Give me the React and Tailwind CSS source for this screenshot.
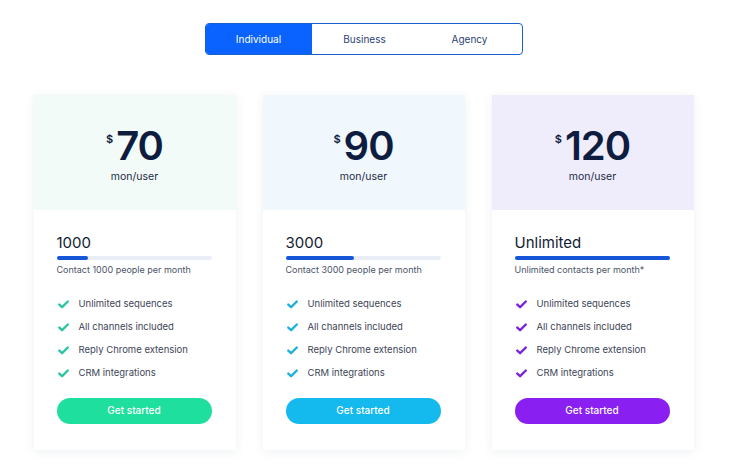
const plans = [
  {
    price: '70',
    head: 'bg-[#f2fbf8]',
    amount: '1000',
    note: 'Contact 1000 people per month',
    fill: 20,
    check: '#2ec4a0',
    button: 'bg-[#1fdf9e]',
  },
  {
    price: '90',
    head: 'bg-[#f0f7fd]',
    amount: '3000',
    note: 'Contact 3000 people per month',
    fill: 44,
    check: '#1fb1dd',
    button: 'bg-[#14b9ee]',
  },
  {
    price: '120',
    head: 'bg-[#efedfc]',
    amount: 'Unlimited',
    note: 'Unlimited contacts per month*',
    fill: 100,
    check: '#7b25d9',
    button: 'bg-[#8a1ff2]',
  },
];

const features = ['Unlimited sequences', 'All channels included', 'Reply Chrome extension', 'CRM integrations'];

function Check({ color }) {
  return (
    <svg width="11" height="9" viewBox="0 0 11 9" className="flex-shrink-0">
      <path d="M1.3 4.6 L4.1 7.2 L9.8 1.5" fill="none" stroke={color} strokeWidth="2.4" strokeLinecap="round" strokeLinejoin="round" />
    </svg>
  );
}

function PlanCard({ plan }) {
  return (
    <div className="w-[202px] bg-white shadow-[0_2px_10px_rgba(30,50,90,0.07)]">
      <div className={`${plan.head} h-[115px] flex flex-col items-center pt-[32px]`}>
        <div className="flex items-start text-[#0e1d3f]">
          <span className="text-[11px] font-semibold mt-[4px] mr-[3px]">$</span>
          <span className="text-[40px] leading-[38px] font-semibold tracking-[-1px]">{plan.price}</span>
        </div>
        <p className="text-[10.5px] text-[#1c2a45] mt-[4px]">mon/user</p>
      </div>
      <div className="px-[23px] pt-[24px] pb-[26px]">
        <p className="text-[15px] leading-[18px] text-[#111c33]">{plan.amount}</p>
        <div className="mt-[4px] h-[4px] w-[155px] rounded-full bg-[#e9eef7]">
          <div className="h-full rounded-full bg-[#1656d8]" style={{ width: `${plan.fill}%` }} />
        </div>
        <p className="mt-[3px] text-[9px] text-[#4a5468]">{plan.note}</p>
        <ul className="mt-[21px] flex flex-col gap-[9px]">
          {features.map((f) => (
            <li key={f} className="flex items-center gap-[10px] h-[14px] pl-[1px]">
              <Check color={plan.check} />
              <span className="text-[9.5px] text-[#3d4557]">{f}</span>
            </li>
          ))}
        </ul>
        <button className={`${plan.button} mt-[17px] w-[155px] h-[26px] rounded-full text-white text-[10px] font-medium`}>
          Get started
        </button>
      </div>
    </div>
  );
}

export default function App() {
  return (
    <div className="w-[750px] h-[472px] bg-white flex flex-col items-center pt-[23px] pr-[23px]" style={{ fontFamily: 'Inter, "Noto Sans", sans-serif' }}>
      <div className="flex w-[318px] h-[32px] rounded-[4px] border border-[#1a5fd0] overflow-hidden text-[10px]">
        <div className="w-[106px] bg-[#0a63ff] text-white flex items-center justify-center">Individual</div>
        <div className="w-[106px] text-[#2b3f75] flex items-center justify-center">Business</div>
        <div className="flex-1 text-[#2b3f75] flex items-center justify-center">Agency</div>
      </div>
      <div className="flex gap-[27px] mt-[40px]">
        {plans.map((p) => (
          <PlanCard key={p.price} plan={p} />
        ))}
      </div>
    </div>
  );
}
